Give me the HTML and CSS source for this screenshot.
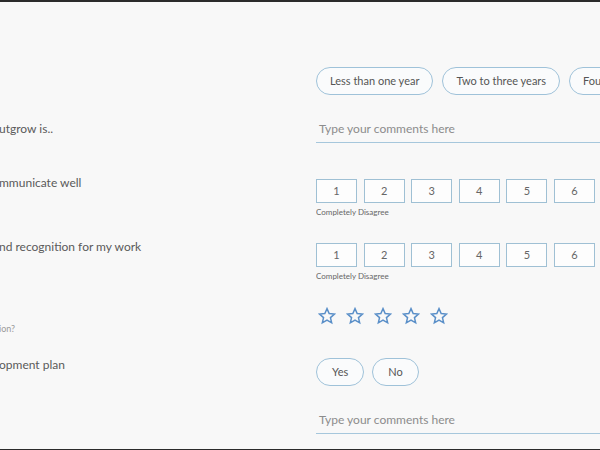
FILE: index.html
```html
<!DOCTYPE html>
<html>
<head>
<meta charset="utf-8">
<link rel="stylesheet" href="styles.css">
</head>
<body>
<div class="page">
  <div class="row row-pills">
    <div class="label"></div>
    <div class="answer">
      <div class="pills">
        <span class="pill">Less than one year</span>
        <span class="pill">Two to three years</span>
        <span class="pill">Four to five years</span>
      </div>
    </div>
  </div>

  <div class="row row-comment1">
    <div class="label label-line">utgrow is..</div>
    <div class="answer">
      <div class="comment">Type your comments here</div>
    </div>
  </div>

  <div class="row row-scale1">
    <div class="label">mmunicate well</div>
    <div class="answer scale-answer">
      <div class="scale">
        <span class="box">1</span><span class="box">2</span><span class="box">3</span><span class="box">4</span><span class="box">5</span><span class="box">6</span>
      </div>
      <div class="caption">Completely Disagree</div>
    </div>
  </div>

  <div class="row row-scale2">
    <div class="label">nd recognition for my work</div>
    <div class="answer scale-answer">
      <div class="scale">
        <span class="box">1</span><span class="box">2</span><span class="box">3</span><span class="box">4</span><span class="box">5</span><span class="box">6</span>
      </div>
      <div class="caption">Completely Disagree</div>
    </div>
  </div>

  <div class="row row-stars">
    <div class="label sublabel">ion?</div>
    <div class="answer stars-answer">
      <div class="stars">
        <svg class="star" viewBox="0 0 24 24"><path d="M12 2.2l2.9 6.6 7.1.6-5.4 4.7 1.6 7-6.2-3.7-6.2 3.7 1.6-7L2 9.4l7.1-.6z"/></svg>
        <svg class="star" viewBox="0 0 24 24"><path d="M12 2.2l2.9 6.6 7.1.6-5.4 4.7 1.6 7-6.2-3.7-6.2 3.7 1.6-7L2 9.4l7.1-.6z"/></svg>
        <svg class="star" viewBox="0 0 24 24"><path d="M12 2.2l2.9 6.6 7.1.6-5.4 4.7 1.6 7-6.2-3.7-6.2 3.7 1.6-7L2 9.4l7.1-.6z"/></svg>
        <svg class="star" viewBox="0 0 24 24"><path d="M12 2.2l2.9 6.6 7.1.6-5.4 4.7 1.6 7-6.2-3.7-6.2 3.7 1.6-7L2 9.4l7.1-.6z"/></svg>
        <svg class="star" viewBox="0 0 24 24"><path d="M12 2.2l2.9 6.6 7.1.6-5.4 4.7 1.6 7-6.2-3.7-6.2 3.7 1.6-7L2 9.4l7.1-.6z"/></svg>
      </div>
    </div>
  </div>

  <div class="row row-yesno">
    <div class="label">opment plan</div>
    <div class="answer yesno-answer">
      <div class="pills">
        <span class="pill pill-yes">Yes</span>
        <span class="pill pill-no">No</span>
      </div>
    </div>
  </div>

  <div class="row row-comment2">
    <div class="label"></div>
    <div class="answer">
      <div class="comment">Type your comments here</div>
    </div>
  </div>
</div>
</body>
</html>
```

FILE: styles.css
```css
html, body {
  margin: 0;
  padding: 0;
}
body {
  background: #f8f8f8;
  font-family: Lato, "Liberation Sans", sans-serif;
  color: #5a5a5a;
  overflow: hidden;
}
.page {
  box-sizing: border-box;
  width: 600px;
  height: 450px;
  border-top: 2px solid #2b2b2b;
  border-bottom: 1px solid #2b2b2b;
  padding-top: 65px;
  overflow: hidden;
}
.row {
  display: grid;
  grid-template-columns: 316px 1fr;
  align-items: start;
}
.label {
  font-size: 12px;
  line-height: 16px;
  color: #5a5a5a;
  white-space: nowrap;
  overflow: hidden;
  margin-left: -1px;
}
.label-line {
  line-height: 20px;
}
.sublabel {
  font-size: 9px;
  line-height: 12px;
  color: #9a9a9a;
  padding-top: 18px;
}
.answer {
  min-width: 0;
  overflow: hidden;
}
.pills {
  display: flex;
  gap: 9px;
  white-space: nowrap;
}
.pill {
  flex: none;
  box-sizing: border-box;
  height: 28px;
  line-height: 26px;
  padding: 0 13px;
  border: 1px solid #9fc2d9;
  border-radius: 14px;
  font-size: 11px;
  color: #555;
  background: #fafbfc;
}
.row-comment1 {
  margin-top: 24px;
}
.comment {
  font-size: 12px;
  line-height: 20px;
  padding: 0 3px 3px;
  color: #8c8c8c;
  border-bottom: 1px solid #a6c7dc;
}
.row-scale1 {
  margin-top: 32px;
}
.row-scale2 {
  margin-top: 22px;
}
.scale-answer {
  padding-top: 4px;
}
.scale {
  display: flex;
  gap: 6.6px;
}
.box {
  flex: none;
  box-sizing: border-box;
  width: 41px;
  height: 24px;
  line-height: 22px;
  text-align: center;
  border: 1px solid #9fc0d4;
  background: #fdfdfd;
  font-size: 11px;
  color: #666;
}
.caption {
  margin-top: 4px;
  font-size: 8px;
  line-height: 10px;
  color: #666;
}
.row-stars {
  margin-top: 24px;
}
.stars-answer {
  padding-top: 2px;
  padding-left: 2px;
}
.stars {
  display: flex;
  gap: 10px;
}
.star {
  width: 18px;
  height: 18px;
  fill: none;
  stroke: #5a8fc8;
  stroke-width: 2;
  stroke-linejoin: miter;
}
.row-yesno {
  margin-top: 22px;
}
.yesno-answer {
  padding-top: 1px;
}
.yesno-answer .pills {
  gap: 8px;
}
.pill-yes, .pill-no {
  padding: 0 15px;
}
.row-comment2 {
  margin-top: 24px;
}
```
